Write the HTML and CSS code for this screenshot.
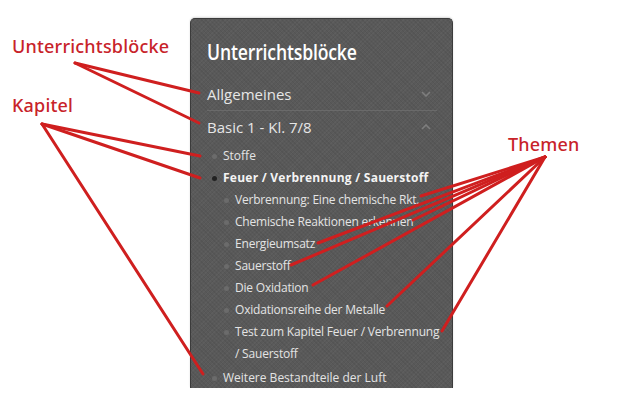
FILE: index.html
```html
<!DOCTYPE html>
<html lang="de">
<head>
<meta charset="utf-8">
<title>Unterrichtsblöcke</title>
<link rel="stylesheet" href="styles.css">
</head>
<body>
<div class="page">
  <nav class="panel">
    <h2 class="panel-title"><span>Unterrichtsblöcke</span></h2>
    <ul class="blocks">
      <li class="block">
        <div class="block-head"><span>Allgemeines</span>
          <svg class="chev" width="10" height="6" viewBox="0 0 10 6"><path d="M1 1 L5 5 L9 1" fill="none" stroke="currentColor" stroke-width="1.6"/></svg>
        </div>
      </li>
      <li class="block open">
        <div class="block-head"><span>Basic 1 - Kl. 7/8</span>
          <svg class="chev" width="10" height="6" viewBox="0 0 10 6"><path d="M1 5 L5 1 L9 5" fill="none" stroke="currentColor" stroke-width="1.6"/></svg>
        </div>
        <ul class="chapters">
          <li class="chapter">Stoffe</li>
          <li class="chapter active"><span class="chapter-name">Feuer / Verbrennung / Sauerstoff</span>
            <ul class="topics">
              <li>Verbrennung: Eine chemische Rkt.</li>
              <li>Chemische Reaktionen erkennen</li>
              <li>Energieumsatz</li>
              <li>Sauerstoff</li>
              <li>Die Oxidation</li>
              <li>Oxidationsreihe der Metalle</li>
              <li>Test zum Kapitel Feuer / Verbrennung / Sauerstoff</li>
            </ul>
          </li>
          <li class="chapter last">Weitere Bestandteile der Luft</li>
        </ul>
      </li>
    </ul>
  </nav>

  <div class="label label-blocks">Unterrichtsblöcke</div>
  <div class="label label-kapitel">Kapitel</div>
  <div class="label label-themen">Themen</div>

  <svg class="arrows" width="640" height="400" viewBox="0 0 640 400">
    <g stroke="#cf1f1f" stroke-width="3" stroke-linecap="round" fill="none">
      <line x1="75" y1="63" x2="199" y2="93"/>
      <line x1="75" y1="63" x2="199" y2="123"/>
      <line x1="42" y1="124" x2="200" y2="156"/>
      <line x1="42" y1="124" x2="200" y2="178"/>
      <line x1="42" y1="124" x2="203" y2="374"/>
      <line x1="545" y1="157" x2="421" y2="196"/>
      <line x1="545" y1="157" x2="413" y2="220"/>
      <line x1="545" y1="157" x2="318" y2="243"/>
      <line x1="545" y1="157" x2="291" y2="265"/>
      <line x1="545" y1="157" x2="313" y2="285"/>
      <line x1="545" y1="157" x2="387" y2="306"/>
      <line x1="545" y1="157" x2="442" y2="331"/>
    </g>
  </svg>
</div>
</body>
</html>
```

FILE: styles.css
```css
* { box-sizing: border-box; }
html, body { margin: 0; padding: 0; background: #fff; }
body { width: 640px; height: 400px; overflow: hidden; }

.page {
  position: relative;
  width: 640px;
  height: 400px;
  padding: 18px 0 0 190px;
}

.panel {
  width: 263px;
  height: 370px;
  background-color: #595959;
  background-image:
    repeating-linear-gradient(45deg, rgba(0,0,0,0.06) 0 1px, transparent 1px 3px),
    repeating-linear-gradient(-45deg, rgba(255,255,255,0.03) 0 1px, transparent 1px 3px);
  border: 1px solid #3b3b3b;
  border-bottom: none;
  border-radius: 5px 5px 0 0;
  box-shadow: 0 -1px 2px rgba(0,0,0,0.15);
  padding: 0 15px 0 16px;
  font-family: "Open Sans", "Noto Sans", sans-serif;
}

.panel-title {
  margin: 0;
  padding: 17px 0 12px;
  font-family: "Open Sans", "Noto Sans", sans-serif;
  font-weight: 600;
  font-size: 22px;
  line-height: 30px;
  color: #fff;
  white-space: nowrap;
}
.panel-title span {
  display: inline-block;
  transform: scaleX(0.8);
  transform-origin: left center;
  letter-spacing: -0.2px;
}

.blocks { list-style: none; margin: 0; padding: 0; }

.block-head {
  display: flex;
  align-items: center;
  justify-content: space-between;
  height: 33px;
  font-size: 15px;
  color: #e6e6e6;
  padding-right: 6px;
}
.block:first-child .block-head { border-bottom: 1px solid #6a6a6a; }
.block.open .block-head { height: 32px; }

.chev { color: #7e7e7e; display: block; }

.chapters { list-style: none; margin: 0; padding: 2px 0 0 16px; }
.chapter {
  position: relative;
  font-size: 12px;
  line-height: 22px;
  color: #e4e4e4;
}
.chapter.last { margin-top: 2px; }
.chapter::before {
  content: "";
  position: absolute;
  left: -11px;
  top: 9px;
  width: 5px;
  height: 5px;
  border-radius: 50%;
  background: #6b6b6b;
}
.chapter.active::before { background: #222; }
.chapter-name { font-weight: bold; color: #f4f4f4; letter-spacing: 0.25px; }

.topics { list-style: none; margin: 0 -5px 0 0; padding: 0 0 0 12px; letter-spacing: -0.2px; }
.topics li {
  position: relative;
  color: #e4e4e4;
}
.topics li::before {
  content: "";
  position: absolute;
  left: -11px;
  top: 9px;
  width: 5px;
  height: 5px;
  border-radius: 50%;
  background: #6b6b6b;
}

.label {
  position: absolute;
  font-family: "Noto Sans", "Open Sans", sans-serif;
  font-size: 18px;
  line-height: 20px;
  color: #c8232a;
  font-weight: 500;
  letter-spacing: 0.2px;
}
.label-blocks { left: 12px; top: 36px; }
.label-kapitel { left: 12px; top: 95px; }
.label-themen { left: 508px; top: 134px; }

.arrows { position: absolute; left: 0; top: 0; pointer-events: none; }
```
